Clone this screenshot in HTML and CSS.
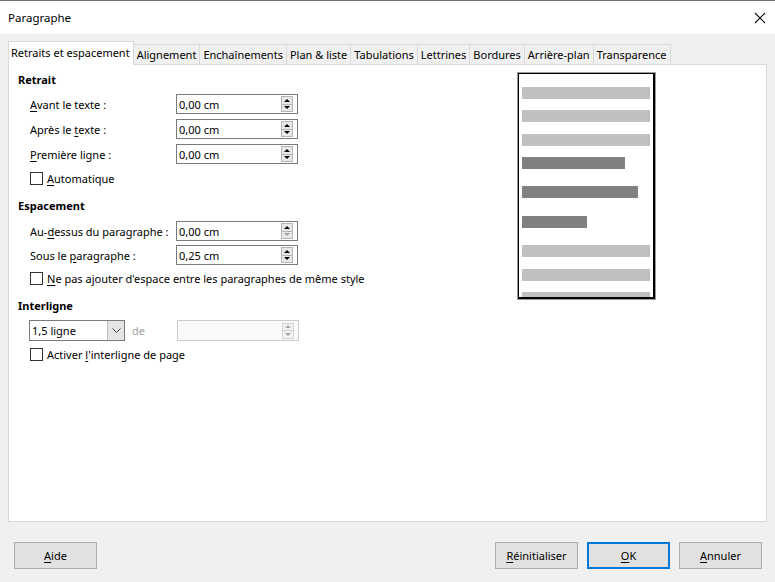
FILE: index.html
```html
<!DOCTYPE html>
<html lang="fr">
<head>
<meta charset="utf-8">
<title>Paragraphe</title>
<link rel="stylesheet" href="styles.css">
</head>
<body>
<div class="window">
  <div class="titlebar">
    <span class="title">Paragraphe</span>
    <svg class="close" width="12" height="12" viewBox="0 0 12 12"><path d="M1 1 L11 11 M11 1 L1 11" stroke="#111" stroke-width="1.1" fill="none"/></svg>
  </div>
  <div class="body">
    <div class="tabs">
      <div class="tab active">Retraits et espacement</div>
      <div class="tab">Alignement</div>
      <div class="tab">Enchaînements</div>
      <div class="tab">Plan &amp; liste</div>
      <div class="tab">Tabulations</div>
      <div class="tab">Lettrines</div>
      <div class="tab">Bordures</div>
      <div class="tab">Arrière-plan</div>
      <div class="tab">Transparence</div>
    </div>
    <div class="panel">
      <div class="form">
        <div class="heading">Retrait</div>
        <div class="row first">
          <label class="lbl"><u>A</u>vant le texte :</label>
          <div class="spin"><span class="val">0,00 cm</span><span class="arrows"><span class="up"></span><span class="down"></span></span></div>
        </div>
        <div class="row">
          <label class="lbl">Après le <u>t</u>exte :</label>
          <div class="spin"><span class="val">0,00 cm</span><span class="arrows"><span class="up"></span><span class="down"></span></span></div>
        </div>
        <div class="row">
          <label class="lbl"><u>P</u>remière ligne :</label>
          <div class="spin"><span class="val">0,00 cm</span><span class="arrows"><span class="up"></span><span class="down"></span></span></div>
        </div>
        <div class="check c1"><span class="box"></span><span><u>A</u>utomatique</span></div>

        <div class="heading h2">Espacement</div>
        <div class="row first2">
          <label class="lbl">Au-<u>d</u>essus du paragraphe :</label>
          <div class="spin"><span class="val">0,00 cm</span><span class="arrows"><span class="up"></span><span class="down dim"></span></span></div>
        </div>
        <div class="row tight">
          <label class="lbl">Sous le <u>p</u>aragraphe :</label>
          <div class="spin"><span class="val">0,25 cm</span><span class="arrows"><span class="up"></span><span class="down"></span></span></div>
        </div>
        <div class="check c2"><span class="box"></span><span><u>N</u>e pas ajouter d'espace entre les paragraphes de même style</span></div>

        <div class="heading h3">Interligne</div>
        <div class="row combo-row">
          <div class="combo"><span class="val">1,5 ligne</span><span class="drop"><svg width="9" height="6" viewBox="0 0 9 6"><path d="M0.5 0.5 L4.5 4.5 L8.5 0.5" stroke="#444" stroke-width="1" fill="none"/></svg></span></div>
          <span class="de">de</span>
          <div class="spin disabled"><span class="val"></span><span class="arrows"><span class="up"></span><span class="down"></span></span></div>
        </div>
        <div class="check c3"><span class="box"></span><span>Activer <u>l</u>'interligne de page</span></div>
      </div>
      <div class="preview">
        <div class="bar light" style="margin-top:13px"></div>
        <div class="bar light" style="margin-top:11px"></div>
        <div class="bar light" style="margin-top:12px"></div>
        <div class="bar dark" style="margin-top:11px;width:103px"></div>
        <div class="bar dark" style="margin-top:17px;width:116px"></div>
        <div class="bar dark" style="margin-top:18px;width:65px"></div>
        <div class="bar light" style="margin-top:17px"></div>
        <div class="bar light" style="margin-top:12px"></div>
        <div class="bar light" style="margin-top:11px"></div>
      </div>
    </div>
    <div class="buttons">
      <button class="btn"><u>A</u>ide</button>
      <div class="spacer"></div>
      <button class="btn"><u>R</u>éinitialiser</button>
      <button class="btn default"><u>O</u>K</button>
      <button class="btn"><u>A</u>nnuler</button>
    </div>
  </div>
</div>
</body>
</html>
```

FILE: styles.css
```css
* { box-sizing: border-box; }
html, body { margin: 0; padding: 0; }
body {
  width: 775px;
  height: 582px;
  overflow: hidden;
  background: #f0f0f0;
  font-family: "Noto Sans", "Open Sans", sans-serif;
  font-size: 11px;
  color: #000;
}
u { text-decoration: underline; text-underline-offset: 2px; }
.window {
  border-top: 1px solid #6f6f6f;
  height: 582px;
}
.titlebar {
  height: 33px;
  background: #fff;
  display: flex;
  align-items: center;
  justify-content: space-between;
  padding: 0 8px 0 8px;
}
.title { font-size: 11.5px; }
.close { margin-right: 1px; }
.body { padding: 0 8px; }
.tabs {
  display: flex;
  align-items: flex-end;
  height: 30px;
  padding-top: 6px;
  position: relative;
  z-index: 1;
}
.tab {
  height: 20px;
  line-height: 19px;
  padding: 0 3px;
  border: 1px solid #d9d9d9;
  border-bottom: none;
  border-left: none;
  background: #f0f0f0;
  white-space: nowrap;
}
.tab.active {
  height: 24px;
  line-height: 22px;
  background: #fff;
  border-left: 1px solid #d9d9d9;
  margin-bottom: -1px;
  padding: 0 3px 0 2px;
}
.panel {
  height: 458px;
  background: #fff;
  border: 1px solid #d9d9d9;
  display: flex;
}
.form {
  width: 509px;
  flex: none;
  padding-left: 9px;
  padding-top: 7px;
}
.heading {
  font-weight: bold;
  height: 16px;
  line-height: 16px;
}
.h2 { margin-top: 12px; }
.h3 { margin-top: 12px; }
.row {
  display: flex;
  align-items: center;
  height: 20px;
  margin-top: 5px;
}
.row.first { margin-top: 6px; }
.row.first2 { margin-top: 7px; }
.row.tight { margin-top: 4px; }
.lbl {
  width: 158px;
  flex: none;
  padding-left: 12px;
  white-space: nowrap;
}
.spin {
  width: 122px;
  flex: none;
  height: 20px;
  border: 1px solid #7a7a7a;
  background: #fff;
  display: flex;
  align-items: center;
  justify-content: space-between;
  padding-left: 2px;
  padding-right: 4px;
}
.spin.disabled { border-color: #cccccc; background: #fafafa; }
.arrows {
  display: flex;
  flex-direction: column;
  width: 12px;
  height: 16px;
  border: 1px solid #b5b5b5;
  background: #e8e8e8;
}
.arrows span {
  flex: 1;
  display: flex;
  align-items: center;
  justify-content: center;
}
.arrows .up { border-bottom: 1px solid #b5b5b5; }
.arrows .up::before {
  content: "";
  border-left: 3px solid transparent;
  border-right: 3px solid transparent;
  border-bottom: 3px solid #000;
}
.arrows .down::before {
  content: "";
  border-left: 3px solid transparent;
  border-right: 3px solid transparent;
  border-top: 3px solid #000;
}
.arrows .dim::before { border-top-color: #a0a0a0; }
.disabled .arrows { border-color: #d5d5d5; background: #f2f2f2; }
.disabled .arrows .up { border-bottom-color: #d5d5d5; }
.disabled .arrows .up::before { border-bottom-color: #a6a6a6; }
.disabled .arrows .down::before { border-top-color: #a6a6a6; }
.check {
  display: flex;
  align-items: center;
  height: 16px;
  padding-left: 12px;
  white-space: nowrap;
}
.check .box {
  width: 13px;
  height: 13px;
  border: 1px solid #333;
  background: #fff;
  margin-right: 4px;
  flex: none;
}
.c1 { margin-top: 6px; }
.c2 { margin-top: 5px; }
.c3 { margin-top: 5px; }
.combo-row { height: 21px; margin-top: 6px; }
.combo {
  margin-left: 11px;
  width: 96px;
  flex: none;
  height: 21px;
  border: 1px solid #7a7a7a;
  display: flex;
  align-items: stretch;
  padding-left: 2px;
}
.combo .val { flex: 1; line-height: 19px; }
.combo .drop {
  width: 17px;
  background: #e5e5e5;
  border-left: 1px solid #bdbdbd;
  display: flex;
  align-items: center;
  justify-content: center;
}
.de {
  color: #a0a0a0;
  width: 52px;
  flex: none;
  padding-left: 7px;
}
.combo-row .spin { height: 21px; }
.preview {
  margin-top: 8px;
  width: 137px;
  height: 226px;
  border: 1px solid #000;
  border-right-width: 2px;
  border-bottom-width: 2px;
  box-shadow: 0 0 0 1px #9a9a9a;
  background: #fff;
  overflow: hidden;
  padding-left: 3px;
  display: flex;
  flex-direction: column;
}
.bar { height: 12px; width: 128px; flex: none; }
.bar.light { background: #c0c0c0; }
.bar.dark { background: #808080; }
.buttons {
  display: flex;
  margin-top: 20px;
  padding-left: 6px;
  padding-right: 5px;
  gap: 9px;
}
.spacer { flex: 1; }
.btn {
  width: 83px;
  height: 27px;
  background: #e1e1e1;
  border: 1px solid #adadad;
  font-family: inherit;
  font-size: 11px;
  color: #000;
  padding: 0;
}
.btn.default { border: 2px solid #0078d7; }
```
